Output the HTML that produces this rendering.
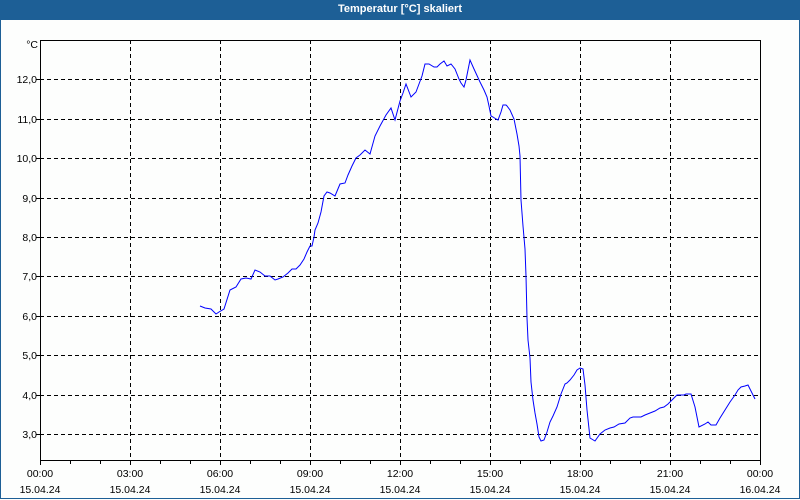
<!DOCTYPE html>
<html><head><meta charset="utf-8"><style>
html,body{margin:0;padding:0;background:#fdfefd;}
body{width:800px;height:500px;position:relative;overflow:hidden;font-family:"Liberation Sans",sans-serif;}
.hdr{position:absolute;left:0;top:0;width:800px;height:20px;background:#1d5f96;color:#fff;font-weight:bold;font-size:11px;text-align:center;line-height:19px;}
.frame{position:absolute;left:0;top:20px;width:798px;height:478px;border:1px solid #1d5f96;border-top:none;}
svg{position:absolute;left:0;top:0;}
text{font-family:"Liberation Sans",sans-serif;font-size:10.5px;fill:#000;}
</style></head><body>
<div class="hdr">Temperatur [°C] skaliert</div>
<div class="frame"></div>
<svg width="800" height="500">
<g stroke="#000" stroke-width="1" stroke-dasharray="4,3" shape-rendering="crispEdges">
<line x1="40" y1="79.5" x2="760" y2="79.5"/>
<line x1="40" y1="119.5" x2="760" y2="119.5"/>
<line x1="40" y1="158.5" x2="760" y2="158.5"/>
<line x1="40" y1="198.5" x2="760" y2="198.5"/>
<line x1="40" y1="237.5" x2="760" y2="237.5"/>
<line x1="40" y1="276.5" x2="760" y2="276.5"/>
<line x1="40" y1="316.5" x2="760" y2="316.5"/>
<line x1="40" y1="355.5" x2="760" y2="355.5"/>
<line x1="40" y1="395.5" x2="760" y2="395.5"/>
<line x1="40" y1="434.5" x2="760" y2="434.5"/>
<line x1="130.5" y1="40" x2="130.5" y2="461"/>
<line x1="220.5" y1="40" x2="220.5" y2="461"/>
<line x1="310.5" y1="40" x2="310.5" y2="461"/>
<line x1="400.5" y1="40" x2="400.5" y2="461"/>
<line x1="490.5" y1="40" x2="490.5" y2="461"/>
<line x1="580.5" y1="40" x2="580.5" y2="461"/>
<line x1="670.5" y1="40" x2="670.5" y2="461"/>
</g>
<g stroke="#000" stroke-width="1" shape-rendering="crispEdges" fill="none">
<path d="M40.5 40.5H760.5V460.5H40.5Z"/>
<path d="M40.5 461v4M70.5 461v3M100.5 461v3M130.5 461v4M160.5 461v3M190.5 461v3M220.5 461v4M250.5 461v3M280.5 461v3M310.5 461v4M340.5 461v3M370.5 461v3M400.5 461v4M430.5 461v3M460.5 461v3M490.5 461v4M520.5 461v3M550.5 461v3M580.5 461v4M610.5 461v3M640.5 461v3M670.5 461v4M700.5 461v3M730.5 461v3M760.5 461v4"/>
<path d="M36 79.5h4M36 119.5h4M36 158.5h4M36 198.5h4M36 237.5h4M36 276.5h4M36 316.5h4M36 355.5h4M36 395.5h4M36 434.5h4"/>
</g>
<g text-anchor="end">
<text x="38" y="48">°C</text>
<text x="37" y="83">12,0</text>
<text x="37" y="123">11,0</text>
<text x="37" y="162">10,0</text>
<text x="37" y="202">9,0</text>
<text x="37" y="241">8,0</text>
<text x="37" y="280">7,0</text>
<text x="37" y="320">6,0</text>
<text x="37" y="359">5,0</text>
<text x="37" y="399">4,0</text>
<text x="37" y="438">3,0</text>
</g>
<g text-anchor="middle">
<text x="40" y="477">00:00</text><text x="40" y="493">15.04.24</text>
<text x="130" y="477">03:00</text><text x="130" y="493">15.04.24</text>
<text x="220" y="477">06:00</text><text x="220" y="493">15.04.24</text>
<text x="310" y="477">09:00</text><text x="310" y="493">15.04.24</text>
<text x="400" y="477">12:00</text><text x="400" y="493">15.04.24</text>
<text x="490" y="477">15:00</text><text x="490" y="493">15.04.24</text>
<text x="580" y="477">18:00</text><text x="580" y="493">15.04.24</text>
<text x="670" y="477">21:00</text><text x="670" y="493">15.04.24</text>
<text x="760" y="477">00:00</text><text x="760" y="493">16.04.24</text>
</g>
<polyline fill="none" stroke="#0000ff" stroke-width="1" points="200,306 205,308 211,309 216,314 219,312 224,309 230,290 236,287 241,279 246,278 251,279 255,270 260,272 265,276 270,276 275,280 278,279 283,277 288,273 292,269 296,269 300,265 304,259 307,252 310,246 312,246 314,237 315,230 318,223 321,212 324,196 327,192 330,193 335,196 340,184 345,183 348,175 352,166 356,158 360,155 365,150 370,154 375,136 380,126 386,115 391,108 395,120 400,101 403,93 406,84 411,97 416,92 419,84 422,76 425,64 429,64 434,67 437,67 440,64 444,61 447,66 451,64 455,69 459,79 461,83 464,87 466,80 470,60 474,69 480,82 484,90 487,97 489,106 491,116 493,117 496,119 498,120 501,112 503,105 506,105 507,106 510,110 514,119 517,134 519,146 520,156 521,200 523,226 525,249 526,276 527,318 528,340 530,358 531,382 533,400 535,413 537,424 539,437 541,441 544,440 547,432 550,422 553,416 557,407 561,394 565,384 567,383 570,380 574,375 577,370 580,368 583,369 585,385 587,410 590,438 595,441 600,434 605,430 610,428 614,427 619,424 625,423 630,418 633,417 641,417 645,415 650,413 655,411 660,408 664,407 668,404 671,401 675,397 677,395 681,395 684,395 686,394 691,394 695,407 699,427 705,424 708,422 711,425 716,425 720,418 725,410 730,402 735,395 738,390 741,387 745,386 748,385 752,393 755,399"/>
</svg>
</body></html>
